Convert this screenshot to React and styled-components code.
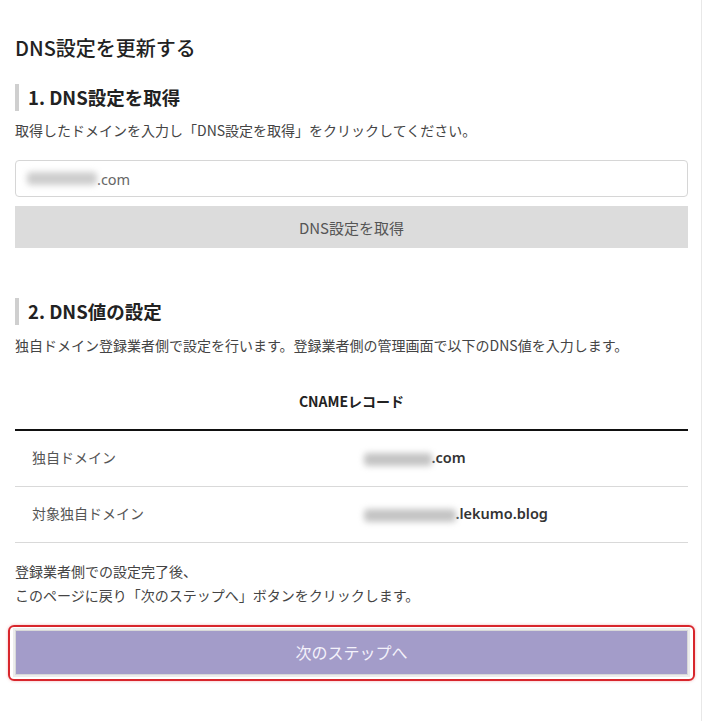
import React from "react";
import styled, { createGlobalStyle } from "styled-components";

const GlobalStyle = createGlobalStyle`
  html, body {
    margin: 0;
    padding: 0;
    background: #fff;
  }
  body {
    font-family: "Noto Sans CJK JP", "Noto Sans", sans-serif;
    color: #333;
  }
`;

const Page = styled.div`
  box-sizing: border-box;
  width: 702px;
  min-height: 721px;
  padding: 33px 13px 0 15px;
  border-right: 1px solid #e8e8e8;
`;

const Title = styled.h2`
  margin: 0;
  font-size: 20px;
  line-height: 30px;
  font-weight: 500;
  color: #222;
`;

const SectionTitle = styled.h3`
  margin: ${(p) => p.$top}px 0 0;
  padding-left: 9px;
  border-left: 4px solid #cfcfcf;
  font-size: 18.5px;
  line-height: 27px;
  font-weight: 700;
  color: #222;
`;

const Text = styled.p`
  margin: ${(p) => p.$top}px 0 0;
  font-size: 14px;
  line-height: 24px;
  font-weight: 400;
  color: #444;
`;

const Field = styled.div`
  box-sizing: border-box;
  margin-top: 18px;
  height: 37px;
  padding: 0 11px;
  display: flex;
  align-items: center;
  border: 1px solid #d6d6d6;
  border-radius: 4px;
  font-family: "Noto Sans", sans-serif;
  font-size: 14.5px;
  color: #666;
`;

const Blur = styled.span`
  display: inline-block;
  width: ${(p) => p.$w}px;
  height: 13px;
  background: ${(p) => p.$c || "#c4c4c4"};
  border-radius: 4px;
  filter: blur(3px);
  vertical-align: middle;
`;

const GrayButton = styled.button`
  display: block;
  width: 100%;
  height: 42px;
  margin-top: 9px;
  border: none;
  background: #dcdcdc;
  font-family: inherit;
  font-size: 15px;
  color: #555;
  cursor: pointer;
`;

const Table = styled.table`
  width: 100%;
  margin-top: 15px;
  border-collapse: collapse;
`;

const HeadCell = styled.th`
  height: 57px;
  padding: 0;
  border-bottom: 2px solid #111;
  font-size: 14px;
  font-weight: 700;
  color: #222;
  text-align: center;
`;

const Row = styled.tr`
  height: 56px;
  border-bottom: 1px solid #d9d9d9;
`;

const Label = styled.td`
  width: 50%;
  padding: 0 0 2px 17px;
  font-size: 14px;
  color: #555;
`;

const Value = styled.td`
  padding: 0 0 2px 12px;
  font-family: "Noto Sans", sans-serif;
  font-size: 14.5px;
  font-weight: 600;
  color: #333;
`;

const ButtonWrap = styled.div`
  position: relative;
  margin-top: 23px;
`;

const NextButton = styled.button`
  display: block;
  box-sizing: border-box;
  width: 100%;
  height: 45px;
  border: 1px solid #d8d8d8;
  box-shadow: 0 0 0 2px #ececec;
  background: #a39cc9;
  font-family: inherit;
  font-size: 16px;
  color: #f4f2fb;
  cursor: pointer;
`;

const Highlight = styled.div`
  position: absolute;
  inset: -5px -7px -6px -7px;
  border: 2px solid #d8262c;
  border-radius: 6px;
  box-shadow: 0 0 3px rgba(216, 38, 44, 0.35);
  pointer-events: none;
`;

export default function App() {
  return (
    <>
      <GlobalStyle />
      <Page>
        <Title>DNS設定を更新する</Title>

        <SectionTitle $top={21}>1. DNS設定を取得</SectionTitle>
        <Text $top={7}>
          取得したドメインを入力し「DNS設定を取得」をクリックしてください。
        </Text>
        <Field>
          <Blur $w={70} $c="#cdcdcd" />
          .com
        </Field>
        <GrayButton>DNS設定を取得</GrayButton>

        <SectionTitle $top={50}>2. DNS値の設定</SectionTitle>
        <Text $top={8}>
          独自ドメイン登録業者側で設定を行います。登録業者側の管理画面で以下のDNS値を入力します。
        </Text>
        <Table>
          <thead>
            <tr>
              <HeadCell colSpan={2}>CNAMEレコード</HeadCell>
            </tr>
          </thead>
          <tbody>
            <Row>
              <Label>独自ドメイン</Label>
              <Value>
                <Blur $w={68} />
                .com
              </Value>
            </Row>
            <Row>
              <Label>対象独自ドメイン</Label>
              <Value>
                <Blur $w={92} />
                .lekumo.blog
              </Value>
            </Row>
          </tbody>
        </Table>

        <Text $top={16}>
          登録業者側での設定完了後、
          <br />
          このページに戻り「次のステップへ」ボタンをクリックします。
        </Text>

        <ButtonWrap>
          <NextButton>次のステップへ</NextButton>
          <Highlight />
        </ButtonWrap>
      </Page>
    </>
  );
}
